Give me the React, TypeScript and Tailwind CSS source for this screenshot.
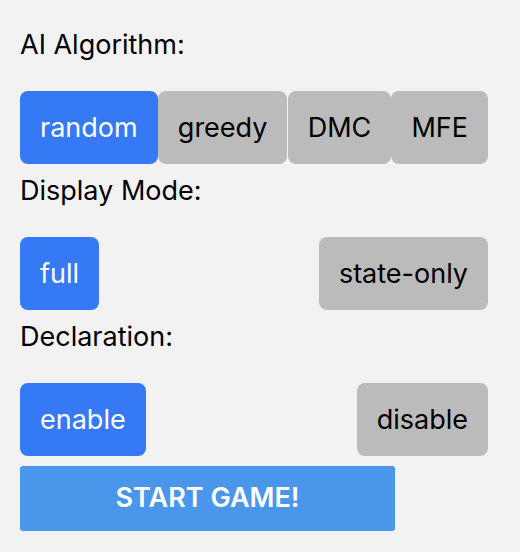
import { useState } from "react";

const Option = ({
  label,
  active,
  onClick,
}: {
  label: string;
  active: boolean;
  onClick: () => void;
}) => (
  <button
    onClick={onClick}
    className={`px-5 py-5 rounded-lg text-[27px] leading-[33px] ${
      active ? "bg-[#3679f5] text-white" : "bg-[#bbbbbb] text-black"
    }`}
  >
    {label}
  </button>
);

export default function App() {
  const [algo, setAlgo] = useState("random");
  const [mode, setMode] = useState("full");
  const [decl, setDecl] = useState("enable");

  const groups = [
    { title: "AI Algorithm:", opts: ["random", "greedy", "DMC", "MFE"], value: algo, set: setAlgo },
    { title: "Display Mode:", opts: ["full", "state-only"], value: mode, set: setMode },
    { title: "Declaration:", opts: ["enable", "disable"], value: decl, set: setDecl },
  ];

  return (
    <div className="min-h-[552px] w-[520px] bg-[#f2f2f2] px-5 pt-[18px] font-[Inter,sans-serif] text-black">
      <div className="w-[468px]">
        {groups.map((g) => (
          <div key={g.title}>
            <p className="mt-[11px] mb-[30px] text-[27px] leading-8">{g.title}</p>
            <div className="flex justify-between">
              {g.opts.map((o) => (
                <Option key={o} label={o} active={g.value === o} onClick={() => g.set(o)} />
              ))}
            </div>
          </div>
        ))}

        <button className="mt-[10px] h-[65px] w-[375px] rounded-[3px] bg-[#4a96ea] text-[27px] font-semibold text-white">
          START GAME!
        </button>
      </div>
    </div>
  );
}
